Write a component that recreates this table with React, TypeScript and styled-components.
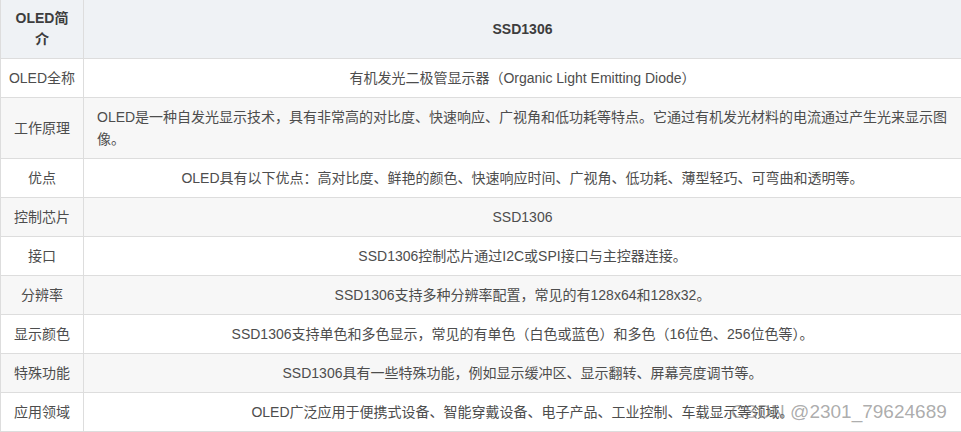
import React from "react";
import styled, { createGlobalStyle } from "styled-components";

const GlobalStyle = createGlobalStyle`
  html, body {
    margin: 0;
    padding: 0;
    background: #ffffff;
    overflow: hidden;
  }
  body {
    font-family: "Liberation Sans", "Noto Sans CJK SC", sans-serif;
    font-size: 14px;
    color: #4d4d4d;
  }
`;

const Page = styled.div`
  position: relative;
  width: 961px;
  height: 432px;
`;

const Table = styled.div`
  display: flex;
  flex-direction: column;
  width: 961px;
  border-left: 1px solid #dddddd;
  box-sizing: border-box;
`;

const Row = styled.div<{ $tone: "head" | "white" | "gray" }>`
  display: grid;
  grid-template-columns: 83px 1fr;
  border-bottom: 1px solid #dddddd;
  background: ${(p) =>
    p.$tone === "head" ? "#eff2f5" : p.$tone === "gray" ? "#f7f7f7" : "#ffffff"};
`;

const LabelCell = styled.div<{ $head?: boolean }>`
  display: flex;
  align-items: center;
  justify-content: center;
  text-align: center;
  border-right: 1px solid #dddddd;
  padding: 8px ${(p) => (p.$head ? "9px" : "6px")};
  line-height: ${(p) => (p.$head ? "21px" : "22px")};
  font-weight: ${(p) => (p.$head ? 700 : 400)};
  color: ${(p) => (p.$head ? "#3d3d3d" : "#4d4d4d")};
`;

const ValueCell = styled.div<{ $head?: boolean; $left?: boolean }>`
  display: flex;
  align-items: center;
  justify-content: ${(p) => (p.$left ? "flex-start" : "center")};
  text-align: ${(p) => (p.$left ? "left" : "center")};
  padding: 8px 13px;
  line-height: ${(p) => (p.$head ? "21px" : "22px")};
  font-weight: ${(p) => (p.$head ? 700 : 400)};
  color: ${(p) => (p.$head ? "#3d3d3d" : "#4d4d4d")};
`;

const Watermark = styled.div`
  position: absolute;
  left: 731px;
  top: 400px;
  font-family: "Liberation Sans", "Noto Sans CJK SC", sans-serif;
  font-size: 19px;
  line-height: 24px;
  color: rgba(120, 120, 120, 0.62);
  white-space: nowrap;
  pointer-events: none;
`;

type Item = { label: string; value: string; left?: boolean };

const items: Item[] = [
  { label: "OLED全称", value: "有机发光二极管显示器（Organic Light Emitting Diode）" },
  {
    label: "工作原理",
    value:
      "OLED是一种自发光显示技术，具有非常高的对比度、快速响应、广视角和低功耗等特点。它通过有机发光材料的电流通过产生光来显示图像。",
    left: true,
  },
  { label: "优点", value: "OLED具有以下优点：高对比度、鲜艳的颜色、快速响应时间、广视角、低功耗、薄型轻巧、可弯曲和透明等。" },
  { label: "控制芯片", value: "SSD1306" },
  { label: "接口", value: "SSD1306控制芯片通过I2C或SPI接口与主控器连接。" },
  { label: "分辨率", value: "SSD1306支持多种分辨率配置，常见的有128x64和128x32。" },
  { label: "显示颜色", value: "SSD1306支持单色和多色显示，常见的有单色（白色或蓝色）和多色（16位色、256位色等）。" },
  { label: "特殊功能", value: "SSD1306具有一些特殊功能，例如显示缓冲区、显示翻转、屏幕亮度调节等。" },
  { label: "应用领域", value: "OLED广泛应用于便携式设备、智能穿戴设备、电子产品、工业控制、车载显示等领域。" },
];

export default function App() {
  return (
    <>
      <GlobalStyle />
      <Page>
        <Table>
          <Row $tone="head">
            <LabelCell $head>OLED简介</LabelCell>
            <ValueCell $head>SSD1306</ValueCell>
          </Row>
          {items.map((it, i) => (
            <Row key={it.label} $tone={i % 2 === 0 ? "white" : "gray"}>
              <LabelCell>{it.label}</LabelCell>
              <ValueCell $left={it.left}>{it.value}</ValueCell>
            </Row>
          ))}
        </Table>
        <Watermark>CSDN @2301_79624689</Watermark>
      </Page>
    </>
  );
}
